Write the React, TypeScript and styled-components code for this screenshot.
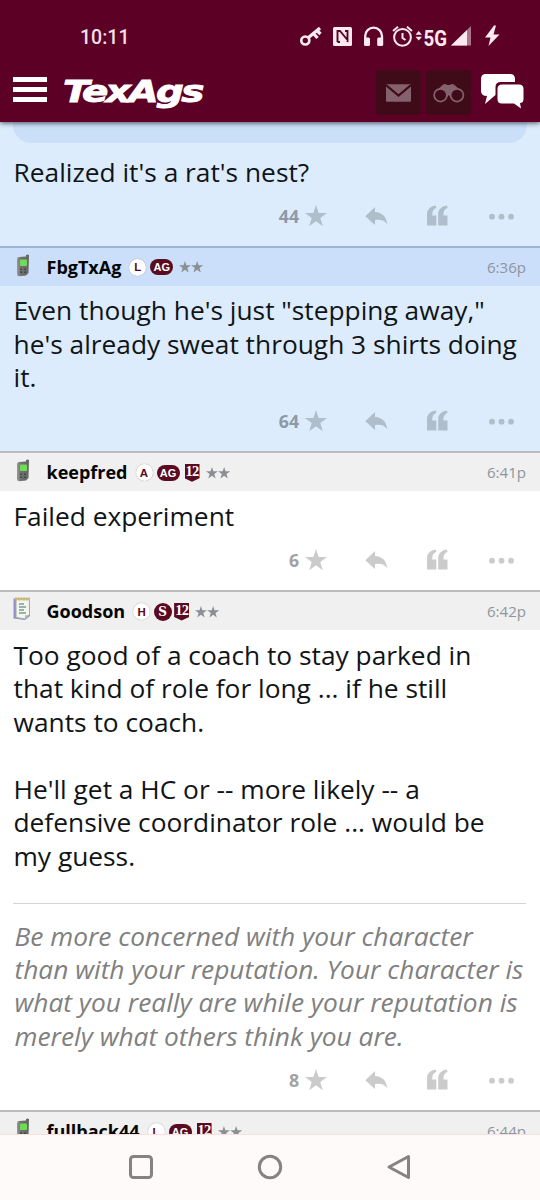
import React from "react";
import styled, { createGlobalStyle, css } from "styled-components";

const Global = createGlobalStyle`
  * { box-sizing: border-box; }
  body { margin: 0; background: #fff; font-family: "Open Sans", "Noto Sans", sans-serif; }
`;

const Screen = styled.div`
  width: 540px;
  height: 1200px;
  display: flex;
  flex-direction: column;
  overflow: hidden;
  background: #fff;
`;

const Top = styled.header`
  flex: none;
  height: 122px;
  background: #5d0025;
  box-shadow: 0 1px 5px rgba(30, 20, 50, 0.75);
  z-index: 1;
`;

const StatusBar = styled.div`
  height: 60px;
  padding: 14px 40px 0 80px;
  display: flex;
  justify-content: space-between;
  align-items: flex-start;
`;

const Clock = styled.span`
  font: 500 19.5px/47px Roboto, sans-serif;
  color: #f3dfe7;
`;

const StatusIcons = styled.svg`
  display: block;
  width: 205px;
  height: 46px;
`;

const AppBar = styled.div`
  height: 62px;
  padding: 10px 16px 0 13px;
  display: flex;
  align-items: flex-start;
`;

const Menu = styled.button`
  width: 34px;
  height: 25px;
  margin-top: 7px;
  padding: 0;
  border: 0;
  background: none;
  display: flex;
  flex-direction: column;
  justify-content: space-between;
`;

const MenuBar = styled.span`
  width: 34px;
  height: 5px;
  background: #fff;
`;

const Logo = styled.svg`
  display: block;
  margin: 2px auto 0 16px;
  width: 150px;
  height: 44px;
`;

const Wordmark = styled.text`
  fill: #fff;
  stroke: #fff;
  stroke-width: 0.9px;
  font: italic 700 31px "DejaVu Sans", sans-serif;
  letter-spacing: -2px;
`;

const HeadButton = styled.button`
  width: 45px;
  height: 45px;
  margin-right: 5px;
  padding: 0;
  border: 0;
  border-radius: 4px;
  background: #3f0b19;
  display: flex;
  align-items: center;
  justify-content: center;
`;

const Chat = styled.svg`
  display: block;
  width: 44px;
  height: 36px;
  margin: 3px 0 0 4px;
`;

const Thread = styled.main`
  flex: 1;
  min-height: 0;
  overflow: hidden;
`;

const Post = styled.article<{ $op?: boolean }>`
  background: ${(p) => (p.$op ? "#dcecfc" : "#fff")};
`;

const QuoteEnd = styled.div`
  height: 21px;
  margin: 0 13px;
  border-radius: 0 0 18px 18px;
  background: #cae0f8;
`;

const PostHead = styled.div<{ $op?: boolean }>`
  height: 40px;
  padding: 0 14px 0 13px;
  display: flex;
  align-items: center;
  border-top: 2px solid ${(p) => (p.$op ? "#9db5d0" : "#bcbcbf")};
  background: ${(p) => (p.$op ? "#cbdffa" : "#f0f0f0")};
`;

const Device = styled.svg<{ $low?: boolean }>`
  flex: none;
  width: 20px;
  height: 26px;
  margin: ${(p) => (p.$low ? 0 : -4)}px 14px 0 0;
`;

const Name = styled.b`
  font-size: 18px;
  line-height: 36px;
  color: #050505;
  margin-right: 8px;
  margin-left: -0.5px;
`;

const Badges = styled.div`
  display: flex;
  align-items: center;
  height: 20px;
  margin-top: 1px;
`;

const badge = css`
  display: flex;
  align-items: center;
  justify-content: center;
  font-family: "Liberation Sans", sans-serif;
  font-weight: 700;
`;

const Letter = styled.span`
  ${badge}
  width: 17px;
  height: 17px;
  border-radius: 50%;
  background: #fff;
  box-shadow: 0 0 1px #888;
  color: #59091d;
  font-size: 11.5px;
`;

const Pill = styled.span`
  ${badge}
  width: 23px;
  height: 16px;
  margin-left: 4px;
  border-radius: 8px;
  background: #5a0b20;
  color: #fff;
  font-size: 11px;
`;

const Sponsor = styled.span`
  ${badge}
  width: 18px;
  height: 18px;
  margin-left: 3.5px;
  border-radius: 50%;
  background: #5a0b20;
  color: #fff;
  font-family: "DejaVu Serif", serif;
  font-size: 12px;
`;

const Twelfth = styled.span<{ $gap: number }>`
  ${badge}
  width: 15px;
  height: 18px;
  padding-bottom: 3px;
  margin-left: ${(p) => p.$gap}px;
  background: #5a0b20;
  clip-path: polygon(0 0, 100% 0, 100% 80%, 50% 100%, 0 80%);
  color: #fff;
  font-family: "Liberation Serif", serif;
  font-size: 14.5px;
  letter-spacing: -0.8px;
`;

const Rank = styled.svg`
  width: 24px;
  height: 14px;
  margin-left: 6px;
`;

const Time = styled.time`
  margin-left: auto;
  font-size: 15.1px;
  color: #8f959d;
`;

const Body = styled.div<{ $first?: boolean }>`
  padding: ${(p) => (p.$first ? 13 : 8.5)}px 0 0 13.5px;
  font-size: 26.32px;
  line-height: 33.5px;
  color: #111417;
  white-space: pre-line;
`;

const Signature = styled.div`
  margin: 30px 14px 0 13px;
  padding: 15.5px 0 0 1.5px;
  border-top: 1px solid #d4d4d4;
  font-size: 26.32px;
  line-height: 33.4px;
  font-style: italic;
  color: #808080;
  white-space: pre;
`;

const Actions = styled.div<{ $op?: boolean; $first?: boolean }>`
  height: ${(p) => (p.$first ? 56 : 56.8)}px;
  padding: ${(p) => (p.$first ? 13 : 13.5)}px 24px 0 0;
  display: flex;
  justify-content: flex-end;
  align-items: flex-start;
  color: ${(p) => (p.$op ? "#b0bdca" : "#cbcbcb")};
`;

const Count = styled.b<{ $op?: boolean }>`
  font-size: 17.7px;
  line-height: 27px;
  color: ${(p) => (p.$op ? "#8d99a7" : "#a2a2a2")};
  margin-right: 6px;
`;

const ActionIcons = styled.svg`
  display: block;
  width: 211px;
  height: 26px;
  fill: currentColor;
`;

const NavBar = styled.nav`
  flex: none;
  height: 66px;
  padding-bottom: 1.5px;
  border-top: 1.5px solid #fadedd;
  background: #fffafa;
  display: flex;
  align-items: center;
  justify-content: center;
  gap: 103px;
`;

const NavIcon = styled.svg`
  width: 26px;
  height: 26px;
  fill: none;
  stroke: #858382;
  stroke-width: 3;
  stroke-linejoin: round;
`;

const STAR = "M11 0 13.6 8H22L15.3 13 17.8 21.3 11 16.2 4.2 21.3 6.7 13 0 8H8.4Z";
const QUOTE = "M0 20V9C0 4 3 .8 8.7 0L9.4 2.2C6.3 3.5 5.2 5.7 5.2 9.8H9.3V20Z";

function Phone() {
  return (
    <Device viewBox="0 0 20 26" $low>
      <defs>
        <linearGradient id="case" x1="0" x2="1">
          <stop offset="0" stopColor="#999" />
          <stop offset=".35" stopColor="#6c706b" />
          <stop offset="1" stopColor="#666" />
        </linearGradient>
      </defs>
      <path d="M4 5Q4 3 6 3L13 2.5V1Q14.5 0 16 1L15.5 19 13 21.5 6 22.2Q3.8 22 4 20Z" fill="url(#case)" />
      <rect x="7" y="5.5" width="7" height="6.5" rx="1" fill="#70db54" />
      <path d="M7 15.2h2m2 0h2m-6 3h2m2 0h2" stroke="#454845" strokeWidth="1.5" />
    </Device>
  );
}

function Notepad() {
  return (
    <Device viewBox="0 0 20 26">
      <path d="M.5 2.5 16 2.5 17 20 12 24 .5 22.5Z" fill="#9290c6" />
      <path d="M3 3H16.3L16.5 18.5 12 23 3 21.5Z" fill="#f3f6ef" stroke="#a5a89f" />
      <path d="M2 3H17" stroke="#c9b774" strokeWidth="3" strokeDasharray="2 .7" />
      <path d="M6 8H11M6 11H13M6 14H11M6 17H13" stroke="#7f9b9c" strokeWidth="1.6" />
      <path d="M12 23V19.5L16.5 18.5Z" fill="#b9b9b4" />
    </Device>
  );
}

function PostActions({ count, op, first }: { count: number; op?: boolean; first?: boolean }) {
  return (
    <Actions $op={op} $first={first}>
      <Count $op={op}>{count}</Count>
      <ActionIcons viewBox="0 0 211 26">
        <path d={STAR} transform="translate(0 2)" />
        <path d="M60.3 13.2 70 4V9C77 9.5 81 13 82.3 21 78.5 16.8 75.5 16.5 70 17V22Z" />
        <g transform="translate(122 2.6)">
          <path d={QUOTE} />
          <path d={QUOTE} transform="translate(11.2 0)" />
        </g>
        <circle cx="187" cy="13.7" r="2.9" />
        <circle cx="196.5" cy="13.7" r="2.9" />
        <circle cx="206" cy="13.7" r="2.9" />
      </ActionIcons>
    </Actions>
  );
}

type HeadProps = {
  name: string;
  letter: string;
  time: string;
  op?: boolean;
  sponsor?: boolean;
  twelfth?: boolean;
  notepad?: boolean;
};

function Head({ name, letter, time, op, sponsor, twelfth, notepad }: HeadProps) {
  return (
    <PostHead $op={op}>
      {notepad ? <Notepad /> : <Phone />}
      <Name>{name}</Name>
      <Badges>
        <Letter>{letter}</Letter>
        {sponsor ? <Sponsor>S</Sponsor> : <Pill>AG</Pill>}
        {twelfth && <Twelfth $gap={sponsor ? 2.5 : 5}>12</Twelfth>}
        <Rank viewBox="0 0 24 14" fill="#8b8e92">
          <path d={STAR} transform="translate(0 1) scale(.54)" />
          <path d={STAR} transform="translate(12.2 1) scale(.54)" />
        </Rank>
      </Badges>
      <Time>{time}</Time>
    </PostHead>
  );
}

export default function App() {
  return (
    <Screen>
      <Global />
      <Top>
        <StatusBar>
          <Clock>10:11</Clock>
          <StatusIcons viewBox="295 14 205 46" fill="#fbe9f0">
            <g fill="none" stroke="#fbe9f0" strokeWidth="2.7">
              <circle cx="305.3" cy="40.5" r="4" />
              <path d="M308.5 37.5 320 28M313.5 33.5 317.5 38M317 30.5 320.5 34" strokeWidth="3.3" />
            </g>
            <rect x="333" y="27" width="19" height="19" rx="1.5" />
            <path d="M337.5 42V31H340L347.5 40V31M337.5 42H340M347.5 42V31H345" fill="none" stroke="#5d0025" strokeWidth="1.9" />
            <path d="M365.2 39V36a8.4 8.4 0 0 1 16.8 0v3" fill="none" stroke="#fbe9f0" strokeWidth="2.3" />
            <rect x="364" y="37.5" width="6" height="8.5" rx="1.5" />
            <rect x="377.2" y="37.5" width="6" height="8.5" rx="1.5" />
            <g fill="none" stroke="#fbe9f0" strokeWidth="2">
              <circle cx="402.5" cy="37.3" r="8.4" />
              <path d="M402.5 33V38L405.5 40M393 31 398 26.8M407 26.8 412 31" />
            </g>
            <path d="M415.5 34.7 418.7 31 422 34.7ZM415.5 36.8H422L418.7 40.5Z" />
            <text x="423.4" y="46.2" fontFamily="Roboto, sans-serif" fontWeight="700" fontSize="22" textLength="23.5" lengthAdjust="spacingAndGlyphs">5G</text>
            <path d="M471 26V45.5H451Z" opacity=".5" />
            <path d="M467 30V45.5H451Z" />
            <path d="M494 25.5 485 37.5H490.5L488.5 46 499.5 34.5H493.5L496 25.5Z" />
          </StatusIcons>
        </StatusBar>
        <AppBar>
          <Menu aria-label="Menu"><MenuBar /><MenuBar /><MenuBar /></Menu>
          <Logo viewBox="0 0 150 44">
            <Wordmark x="0" y="29.5" textLength="139" lengthAdjust="spacingAndGlyphs">TexAgs</Wordmark>
          </Logo>
          <HeadButton aria-label="Messages">
            <svg width="25" height="18" viewBox="0 0 25 18">
              <rect width="25" height="17.5" y=".2" rx="1" fill="#83626d" />
              <path d="M0 1 12.5 11.5 25 1" fill="none" stroke="#3f0b19" strokeWidth="2.2" />
            </svg>
          </HeadButton>
          <HeadButton aria-label="Watched">
            <svg width="32" height="20" viewBox="0 0 32 20" fill="none" stroke="#83626d" strokeWidth="1.7">
              <path d="M2 9 9.5 2Q12 0 14 2H17Q19 0 21.5 2L29.5 9 24 15H18L15.7 12 13.5 15H6Z" fill="#83626d" stroke="none" />
              <circle cx="7.5" cy="12.2" r="6.4" fill="#3f0b19" />
              <circle cx="24" cy="12.2" r="6.4" fill="#3f0b19" />
            </svg>
          </HeadButton>
          <Chat viewBox="0 0 44 36" fill="#fff">
            <path d="M6 1H30Q35 1 35 6V9H21Q15.5 9 15.5 14V22L5 31 7 23Q1 23 1 18V6Q1 1 6 1Z" />
            <path d="M22 11.5H39Q43.5 11.5 43.5 16V26Q43.5 30 40 30L41 35.5 34 30.5H22Q17.5 30.5 17.5 26V16Q17.5 11.5 22 11.5Z" />
          </Chat>
        </AppBar>
      </Top>
      <Thread>
        <Post $op>
          <QuoteEnd />
          <Body $first>Realized it's a rat's nest?</Body>
          <PostActions count={44} op first />
        </Post>
        <Post $op>
          <Head name="FbgTxAg" letter="L" time="6:36p" op />
          <Body>{"Even though he's just \"stepping away,\"\nhe's already sweat through 3 shirts doing\nit."}</Body>
          <PostActions count={64} op />
        </Post>
        <Post>
          <Head name="keepfred" letter="A" time="6:41p" twelfth />
          <Body>Failed experiment</Body>
          <PostActions count={6} />
        </Post>
        <Post>
          <Head name="Goodson" letter="H" time="6:42p" sponsor twelfth notepad />
          <Body>{"Too good of a coach to stay parked in\nthat kind of role for long ... if he still\nwants to coach.\n\nHe'll get a HC or -- more likely -- a\ndefensive coordinator role ... would be\nmy guess."}</Body>
          <Signature>{"Be more concerned with your character\nthan with your reputation. Your character is\nwhat you really are while your reputation is\nmerely what others think you are."}</Signature>
          <PostActions count={8} />
        </Post>
        <Post>
          <Head name="fullback44" letter="L" time="6:44p" twelfth />
        </Post>
      </Thread>
      <NavBar>
        <NavIcon viewBox="0 0 26 26"><rect x="2.5" y="2.5" width="21" height="21" rx="3" /></NavIcon>
        <NavIcon viewBox="0 0 26 26"><circle cx="13" cy="13" r="10.7" /></NavIcon>
        <NavIcon viewBox="0 0 26 26"><path d="M22.5 2.5V23.5L3 13Z" /></NavIcon>
      </NavBar>
    </Screen>
  );
}
